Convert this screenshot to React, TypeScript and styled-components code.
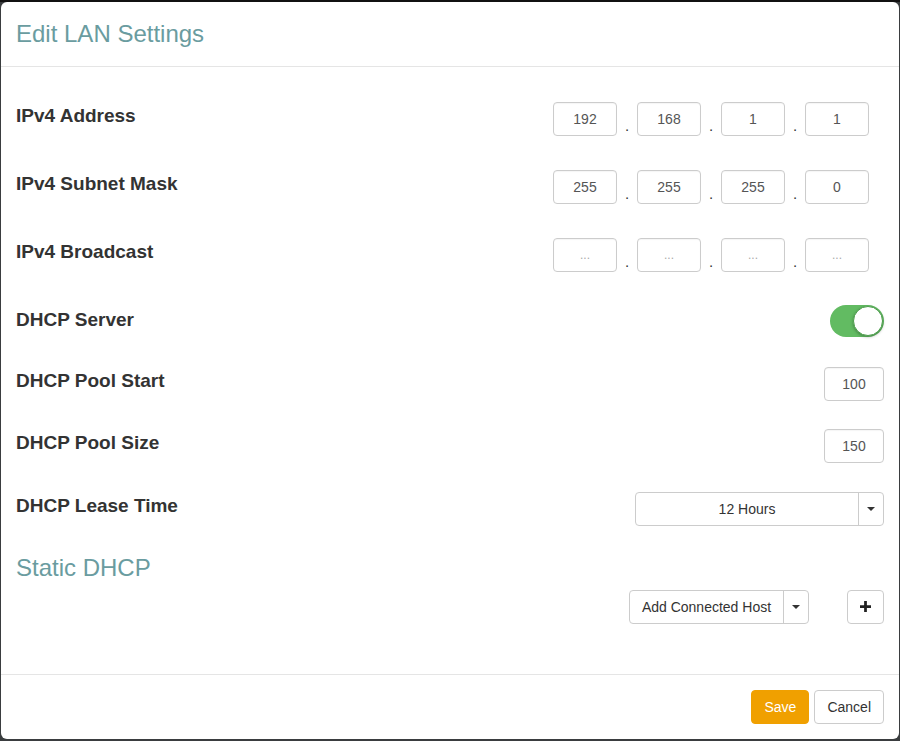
import styled, { createGlobalStyle } from 'styled-components'

const GlobalStyle = createGlobalStyle`
  html, body {
    margin: 0;
    padding: 0;
    background: #2e3133;
    font-family: "Liberation Sans", Arial, sans-serif;
    color: #333;
  }
  * { box-sizing: border-box; }
`

function IpField({ values }: { values: string[] }) {
  return (
    <IpGroup>
      {values.map((v, i) => (
        <IpPart key={i}>
          {i > 0 && <Dot>.</Dot>}
          <Input $w={64} $empty={v === ''}>{v === '' ? '...' : v}</Input>
        </IpPart>
      ))}
    </IpGroup>
  )
}

export default function App() {
  return (
    <>
      <GlobalStyle />
      <Backdrop>
        <Modal>
          <Header>
            <Title>Edit LAN Settings</Title>
          </Header>
          <Body>
            <Row $mb={34}>
              <Label>IPv4 Address</Label>
              <IpField values={['192', '168', '1', '1']} />
            </Row>
            <Row $mb={34}>
              <Label>IPv4 Subnet Mask</Label>
              <IpField values={['255', '255', '255', '0']} />
            </Row>
            <Row $mb={32}>
              <Label>IPv4 Broadcast</Label>
              <IpField values={['', '', '', '']} />
            </Row>
            <Row $mb={30}>
              <Label $pt={6}>DHCP Server</Label>
              <Toggle>
                <Knob />
              </Toggle>
            </Row>
            <Row $mb={28}>
              <Label>DHCP Pool Start</Label>
              <Input $w={60}>100</Input>
            </Row>
            <Row $mb={29}>
              <Label>DHCP Pool Size</Label>
              <Input $w={60}>150</Input>
            </Row>
            <Row $mb={27}>
              <Label>DHCP Lease Time</Label>
              <Select $w={249}>
                <SelectText>12 Hours</SelectText>
                <CaretBox><Caret /></CaretBox>
              </Select>
            </Row>
            <SubTitle>Static DHCP</SubTitle>
            <HostRow>
              <Select $w={180}>
                <SelectText>Add Connected Host</SelectText>
                <CaretBox><Caret /></CaretBox>
              </Select>
              <PlusButton>
                <svg width="11" height="11" viewBox="0 0 12 12">
                  <path d="M4.5 0h3v4.5H12v3H7.5V12h-3V7.5H0v-3h4.5z" fill="#222" />
                </svg>
              </PlusButton>
            </HostRow>
          </Body>
          <Footer>
            <Button $primary>Save</Button>
            <Button>Cancel</Button>
          </Footer>
        </Modal>
      </Backdrop>
    </>
  )
}

const Backdrop = styled.div`
  width: 900px;
  height: 741px;
  padding: 2px 1px 2px 1px;
  background: linear-gradient(to bottom, #111 0px, #111 2px, #3a3d3f 2px);
`
const Modal = styled.div`
  width: 898px;
  height: 737px;
  background: #fff;
  border-radius: 6px;
  display: flex;
  flex-direction: column;
  overflow: hidden;
`
const Header = styled.div`
  padding: 19px 15px 19px;
  border-bottom: 1px solid #e5e5e5;
`
const Title = styled.h4`
  margin: 0;
  font-size: 24px;
  font-weight: 400;
  line-height: 1.1;
  color: #6a9ca0;
`
const Body = styled.div`
  flex: 1;
  padding: 35px 15px 15px;
  display: flex;
  flex-direction: column;
`
const Row = styled.div<{ $mb: number }>`
  display: flex;
  justify-content: space-between;
  align-items: flex-start;
  margin-bottom: ${p => p.$mb}px;
`
const Label = styled.div<{ $pt?: number }>`
  font-size: 19px;
  font-weight: 700;
  line-height: 20px;
  color: #333;
  padding-top: ${p => p.$pt ?? 4}px;
`
const IpGroup = styled.div`
  display: flex;
  padding-right: 15px;
`
const IpPart = styled.div`
  display: flex;
`
const Dot = styled.span`
  width: 20px;
  text-align: center;
  align-self: flex-end;
  font-size: 15px;
  line-height: 15px;
  padding-bottom: 3px;
  color: #333;
`
const Input = styled.div<{ $w: number; $empty?: boolean }>`
  width: ${p => p.$w}px;
  height: 34px;
  border: 1px solid #ccc;
  border-radius: 4px;
  display: flex;
  align-items: center;
  justify-content: center;
  font-size: ${p => (p.$empty ? '12px' : '14px')};
  color: ${p => (p.$empty ? '#aaa' : '#555')};
  box-shadow: inset 0 1px 1px rgba(0, 0, 0, 0.04);
`
const Toggle = styled.div`
  width: 54px;
  height: 32px;
  margin-top: 1px;
  border-radius: 16px;
  background: #62bb62;
  display: flex;
  justify-content: flex-end;
  align-items: center;
  padding: 1px;
`
const Knob = styled.div`
  width: 30px;
  height: 30px;
  border-radius: 50%;
  background: #fff;
  border: 1px solid #4a9e4a;
  box-shadow: 0 1px 3px rgba(0, 0, 0, 0.3);
`
const Select = styled.div<{ $w: number }>`
  width: ${p => p.$w}px;
  height: 34px;
  border: 1px solid #ccc;
  border-radius: 4px;
  display: flex;
  background: #fff;
`
const SelectText = styled.div`
  flex: 1;
  display: flex;
  align-items: center;
  justify-content: center;
  font-size: 14px;
  color: #333;
`
const CaretBox = styled.div`
  width: 25px;
  border-left: 1px solid #ccc;
  display: flex;
  align-items: center;
  justify-content: center;
`
const Caret = styled.span`
  width: 0;
  height: 0;
  border-left: 4px solid transparent;
  border-right: 4px solid transparent;
  border-top: 4px solid #333;
`
const SubTitle = styled.h4`
  margin: 2px 0 8px;
  font-size: 24px;
  font-weight: 400;
  line-height: 1.1;
  color: #6a9ca0;
`
const HostRow = styled.div`
  display: flex;
  justify-content: flex-end;
  gap: 38px;
`
const PlusButton = styled.div`
  width: 37px;
  height: 34px;
  border: 1px solid #ccc;
  border-radius: 4px;
  display: flex;
  align-items: center;
  justify-content: center;
`
const Footer = styled.div`
  padding: 15px;
  border-top: 1px solid #e5e5e5;
  display: flex;
  justify-content: flex-end;
  gap: 5px;
`
const Button = styled.div<{ $primary?: boolean }>`
  height: 34px;
  padding: 0 12px;
  border-radius: 4px;
  display: flex;
  align-items: center;
  font-size: 14px;
  border: 1px solid ${p => (p.$primary ? '#f0a000' : '#ccc')};
  background: ${p => (p.$primary ? '#f0a000' : '#fff')};
  color: ${p => (p.$primary ? '#fff' : '#333')};
`
